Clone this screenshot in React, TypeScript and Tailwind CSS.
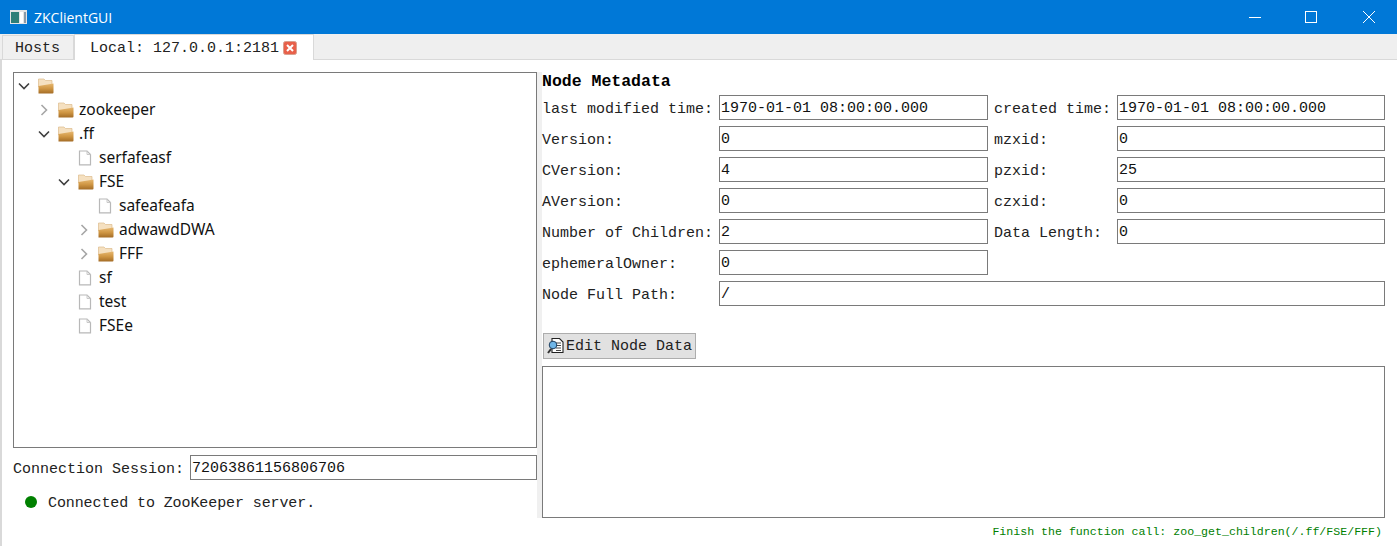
const mono = "font-['Liberation_Mono',monospace]";

type TreeNode = {
  label: string;
  depth: number;
  kind: "folder" | "file";
  expanded?: boolean;
};

const treeNodes: TreeNode[] = [
  { label: "", depth: 0, kind: "folder", expanded: true },
  { label: "zookeeper", depth: 1, kind: "folder", expanded: false },
  { label: ".ff", depth: 1, kind: "folder", expanded: true },
  { label: "serfafeasf", depth: 2, kind: "file" },
  { label: "FSE", depth: 2, kind: "folder", expanded: true },
  { label: "safeafeafa", depth: 3, kind: "file" },
  { label: "adwawdDWA", depth: 3, kind: "folder", expanded: false },
  { label: "FFF", depth: 3, kind: "folder", expanded: false },
  { label: "sf", depth: 2, kind: "file" },
  { label: "test", depth: 2, kind: "file" },
  { label: "FSEe", depth: 2, kind: "file" },
];

const metaRows = [
  ["last modified time:", "1970-01-01 08:00:00.000", "created time:", "1970-01-01 08:00:00.000"],
  ["Version:", "0", "mzxid:", "0"],
  ["CVersion:", "4", "pzxid:", "25"],
  ["AVersion:", "0", "czxid:", "0"],
  ["Number of Children:", "2", "Data Length:", "0"],
];

function Chevron({ open }: { open: boolean }) {
  return (
    <svg width="12" height="12" viewBox="0 0 12 12" fill="none">
      {open ? (
        <path d="M1 3.5 L6 8.5 L11 3.5" stroke="#404040" strokeWidth="1.6" />
      ) : (
        <path d="M3.5 1 L8.5 6 L3.5 11" stroke="#a6a6a6" strokeWidth="1.6" />
      )}
    </svg>
  );
}

function FolderIcon({ id }: { id: string }) {
  return (
    <svg width="16" height="16" viewBox="0 0 16 16">
      <defs>
        <linearGradient id={id} x1="0" y1="0" x2="0" y2="1">
          <stop offset="0" stopColor="#e6b76f" />
          <stop offset="0.5" stopColor="#cf9644" />
          <stop offset="1" stopColor="#a46c26" />
        </linearGradient>
      </defs>
      <path d="M0.5 1 H6 L7.5 2.5 H14 V9 H0.5 Z" fill="#f5e0c0" stroke="#dcbb8c" strokeWidth="0.7" />
      <path d="M0.5 8 L15.5 5.5 V14.5 Q15.5 15.5 14.5 15.5 H0.5 Z" fill={`url(#${id})`} />
    </svg>
  );
}

function FileIcon() {
  return (
    <svg width="14" height="16" viewBox="0 0 14 16" fill="none">
      <path d="M1.5 1 H9 L12.5 4.5 V14.8 H1.5 Z" fill="#fff" stroke="#b8b8b8" strokeWidth="1.2" />
      <path d="M9 1 V4.5 H12.5" stroke="#c8c8c8" />
    </svg>
  );
}

function TextField({ value, className }: { value: string; className?: string }) {
  return (
    <div
      className={`flex h-[25px] items-center border border-[#7a7a7a] bg-white pl-[1px] pt-[4px] text-[15px] text-[#111] ${mono} ${className ?? ""}`}
    >
      {value}
    </div>
  );
}

function Label({ text }: { text: string }) {
  return <span className={`block whitespace-pre pt-[4px] text-[15px] leading-[20px] text-[#222] ${mono}`}>{text}</span>;
}

function TitleBar() {
  return (
    <div className="flex h-[34px] items-center bg-[#0078d7] pl-[10px] text-white">
      <svg width="17" height="14" viewBox="0 0 17 14">
        <rect x="0" y="0" width="17" height="14" fill="#e4e4e4" />
        <rect x="1" y="2" width="8" height="11" fill="#2f7f78" />
        <rect x="10" y="2" width="3" height="11" fill="#fff" />
        <rect x="14" y="2" width="2" height="11" fill="#8a9aa8" />
      </svg>
      <span className="ml-[7px] font-['Open_Sans',sans-serif] text-[14px]">ZKClientGUI</span>
      <div className="ml-auto flex h-full">
        <div className="flex w-[46px] items-center justify-center">
          <div className="h-px w-[12px] bg-white" />
        </div>
        <div className="ml-[10px] flex w-[46px] items-center justify-center">
          <div className="h-[12px] w-[12px] border border-white" />
        </div>
        <div className="ml-[12px] mr-[5px] flex w-[46px] items-center justify-center">
          <svg width="12" height="12" viewBox="0 0 12 12" stroke="white" strokeWidth="1">
            <path d="M0 0 L12 12 M12 0 L0 12" />
          </svg>
        </div>
      </div>
    </div>
  );
}

function TabBar() {
  return (
    <div className="relative z-10 -mb-px flex h-[26px] items-end border-b border-[#d9d9d9] bg-[#efefef] pl-[2px]">
      <div
        className={`flex h-[24px] w-[72px] items-center justify-center border border-b-0 border-[#d9d9d9] bg-[#f0f0f0] pr-[1px] pt-[3px] text-[15px] text-[#222] ${mono}`}
      >
        Hosts
      </div>
      <div
        className={`-mb-px flex h-[26px] w-[240px] items-center border border-b-0 border-[#d9d9d9] bg-white pl-[15px] text-[15px] text-[#222] ${mono}`}
      >
        <span className="pt-[3px]">Local: 127.0.0.1:2181</span>
        <svg className="ml-[4px]" width="14" height="14" viewBox="0 0 14 14">
          <rect x="0.5" y="0.5" width="13" height="13" rx="2" fill="#e8604a" stroke="#d9a08f" />
          <path d="M4 4 L10 10 M10 4 L4 10" stroke="#fff" strokeWidth="2" />
        </svg>
      </div>
    </div>
  );
}

function TreeRow({ node, index }: { node: TreeNode; index: number }) {
  return (
    <div className="flex h-[24px] items-center" style={{ paddingLeft: node.depth * 20 + 4 }}>
      <span className="flex w-[20px] shrink-0 items-center">
        {node.kind === "folder" ? <Chevron open={!!node.expanded} /> : null}
      </span>
      <span className="flex w-[17px] shrink-0 items-center">
        {node.kind === "folder" ? <FolderIcon id={`folder-${index}`} /> : <FileIcon />}
      </span>
      <span className="ml-[4px] font-['Noto_Sans',sans-serif] text-[15.5px] text-[#111]">{node.label}</span>
    </div>
  );
}

function LeftPanel() {
  return (
    <div className="flex w-[537px] shrink-0 flex-col border-l-2 border-[#d9d9d9] pl-[11px] pt-[13px]">
      <div className="h-[376px] border border-[#7a7a7a] bg-white pt-[1px]">
        {treeNodes.map((node, index) => (
          <TreeRow key={index} node={node} index={index} />
        ))}
      </div>
      <div className="mt-[7px] flex items-center">
        <div className="w-[177px]">
          <Label text="Connection Session:" />
        </div>
        <TextField value="72063861156806706" className="flex-1" />
      </div>
      <div className="mt-[10px] flex h-[24px] items-center pl-[12px]">
        <div className="h-[12px] w-[12px] rounded-full bg-[#008000]" />
        <span className={`ml-[11px] pt-[4px] text-[15px] tracking-[-0.1px] text-[#222] ${mono}`}>Connected to ZooKeeper server.</span>
      </div>
    </div>
  );
}

function EditIcon() {
  return (
    <svg width="18" height="18" viewBox="0 0 18 18">
      <path d="M5 1.5 H12.5 L16 5 V15.5 H5 Z" fill="#fff" stroke="#222" strokeWidth="1.1" />
      <path d="M8 6 H14 M9 8.5 H14 M9 11 H14 M9 13.5 H14" stroke="#333" strokeWidth="0.9" />
      <circle cx="6" cy="8" r="3.8" fill="#6fb6e8" stroke="#1f3f5f" strokeWidth="1" />
      <path d="M4 12 L1 16" stroke="#333" strokeWidth="2" />
    </svg>
  );
}

function RightPanel() {
  return (
    <div className="flex min-w-0 flex-1 flex-col pr-[12px]">
      <div className={`h-[36px] pt-[11px] text-[16.5px] font-bold leading-[24px] text-black ${mono}`}>
        Node Metadata
      </div>
      <div className="grid grid-cols-[177px_269px_129px_268px] gap-y-[6px]">
        {metaRows.map(([labelA, valueA, labelB, valueB]) => (
          <div key={labelA} className="col-span-4 grid grid-cols-subgrid items-center">
            <Label text={labelA} />
            <TextField value={valueA} />
            <div className="pl-[6px]">
              <Label text={labelB} />
            </div>
            <TextField value={valueB} />
          </div>
        ))}
        <div className="col-span-4 grid grid-cols-subgrid items-center">
          <Label text="ephemeralOwner:" />
          <TextField value="0" />
        </div>
        <div className="col-span-4 grid grid-cols-subgrid items-center">
          <Label text="Node Full Path:" />
          <TextField value="/" className="col-span-3" />
        </div>
      </div>
      <button
        type="button"
        className={`ml-px mt-[27px] flex h-[26px] w-[153px] items-center border border-[#adadad] bg-[#e1e1e1] pl-[3px] text-[15px] text-[#222] ${mono}`}
      >
        <EditIcon />
        <span className="ml-[1px] pt-[3px]">Edit Node Data</span>
      </button>
      <div className="mt-[7px] h-[152px] border border-[#7a7a7a] bg-white" />
      <div className={`mt-[7px] pr-[3px] text-right text-[11.6px] leading-[14px] text-[#008000] ${mono}`}>
        Finish the function call: zoo_get_children(/.ff/FSE/FFF)
      </div>
    </div>
  );
}

export default function App() {
  return (
    <div className="flex h-[546px] w-[1397px] flex-col overflow-hidden bg-white">
      <TitleBar />
      <TabBar />
      <div className="flex flex-1">
        <LeftPanel />
        <div className="mt-[13px] h-[446px] w-[5px] shrink-0 bg-[#f0f0f0]" />
        <RightPanel />
      </div>
    </div>
  );
}
